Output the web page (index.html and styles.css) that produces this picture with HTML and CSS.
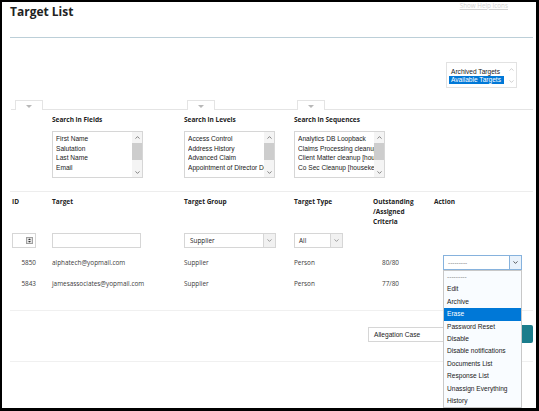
FILE: index.html
```html
<!DOCTYPE html>
<html lang="en">

<head>
    <meta charset="UTF-8" />
    <meta name="viewport" content="width=device-width, initial-scale=1" />
    <title>Target List</title>
    <link rel="stylesheet" href="styles.css">
</head>

<body>
    <div class="page">
        <header class="page-head">
            <h1>Target List</h1>
            <a href="#" class="help-link">Show Help Icons</a>
        </header>

        <div class="status-row">
            <div class="listbox status-list">
                <ul class="listbox-items">
                    <li>Archived Targets</li>
                    <li class="selected">Available Targets</li>
                </ul>
                <div class="listbox-bar faded">
                    <span class="bar-btn"><svg width="5" height="3" viewBox="0 0 5 3"><path d="M0.5 2.6 L2.5 0.6 L4.5 2.6" /></svg></span>
                    <span class="bar-space"></span>
                    <span class="bar-btn"><svg width="5" height="3" viewBox="0 0 5 3"><path d="M0.5 0.4 L2.5 2.4 L4.5 0.4" /></svg></span>
                </div>
            </div>
        </div>

        <!-- collapse tabs for the search panels -->
        <div class="search-tabs">
            <span class="tab tab-a"><svg width="6" height="3" viewBox="0 0 6 3"><path d="M0 0 H6 L3 3 Z" /></svg></span>
            <span class="tab tab-b"><svg width="6" height="3" viewBox="0 0 6 3"><path d="M0 0 H6 L3 3 Z" /></svg></span>
            <span class="tab tab-c"><svg width="6" height="3" viewBox="0 0 6 3"><path d="M0 0 H6 L3 3 Z" /></svg></span>
        </div>

        <div class="search-grid">
            <div></div>
            <div class="search-box">
                <div class="search-label">Search in Fields</div>
                <div class="listbox">
                    <ul class="listbox-items">
                        <li>First Name</li>
                        <li>Salutation</li>
                        <li>Last Name</li>
                        <li>Email</li>
                    </ul>
                    <div class="listbox-bar">
                        <span class="bar-btn up"><svg width="5" height="3" viewBox="0 0 5 3"><path d="M0.5 2.6 L2.5 0.6 L4.5 2.6" /></svg></span>
                        <span class="bar-thumb"></span>
                        <span class="bar-space"></span>
                        <span class="bar-btn"><svg width="5" height="3" viewBox="0 0 5 3"><path d="M0.5 0.4 L2.5 2.4 L4.5 0.4" /></svg></span>
                    </div>
                </div>
            </div>
            <div class="search-box">
                <div class="search-label">Search in Levels</div>
                <div class="listbox">
                    <ul class="listbox-items">
                        <li>Access Control</li>
                        <li>Address History</li>
                        <li>Advanced Claim</li>
                        <li>Appointment of Director Details</li>
                    </ul>
                    <div class="listbox-bar">
                        <span class="bar-btn up"><svg width="5" height="3" viewBox="0 0 5 3"><path d="M0.5 2.6 L2.5 0.6 L4.5 2.6" /></svg></span>
                        <span class="bar-thumb"></span>
                        <span class="bar-space"></span>
                        <span class="bar-btn"><svg width="5" height="3" viewBox="0 0 5 3"><path d="M0.5 0.4 L2.5 2.4 L4.5 0.4" /></svg></span>
                    </div>
                </div>
            </div>
            <div class="search-box">
                <div class="search-label">Search in Sequences</div>
                <div class="listbox">
                    <ul class="listbox-items">
                        <li>Analytics DB Loopback</li>
                        <li>Claims Processing cleanup [housekeeping]</li>
                        <li>Client Matter cleanup [housekeeping]</li>
                        <li>Co Sec Cleanup [housekeeping]</li>
                    </ul>
                    <div class="listbox-bar">
                        <span class="bar-btn up"><svg width="5" height="3" viewBox="0 0 5 3"><path d="M0.5 2.6 L2.5 0.6 L4.5 2.6" /></svg></span>
                        <span class="bar-thumb"></span>
                        <span class="bar-space"></span>
                        <span class="bar-btn"><svg width="5" height="3" viewBox="0 0 5 3"><path d="M0.5 0.4 L2.5 2.4 L4.5 0.4" /></svg></span>
                    </div>
                </div>
            </div>
        </div>

        <div class="target-table">
            <div class="trow thead">
                <div class="c-id">ID</div>
                <div>Target</div>
                <div>Target Group</div>
                <div>Target Type</div>
                <div class="c-count">Outstanding<br>/Assigned<br>Criteria</div>
                <div>Action</div>
            </div>

            <div class="trow tfilter">
                <div class="c-id">
                    <div class="input id-input">
                        <svg width="7" height="7" viewBox="0 0 7 7">
                            <rect x="0.5" y="0.5" width="6" height="6" fill="#e2e2e2" stroke="#a0a0a0" />
                            <path d="M2 3 L3.5 1.5 L5 3 Z M2 4 L3.5 5.5 L5 4 Z" fill="#333" />
                        </svg>
                    </div>
                </div>
                <div><div class="input target-input"></div></div>
                <div>
                    <div class="select group-select">
                        <span class="select-value">Supplier</span>
                        <span class="select-arrow"><svg width="5" height="3" viewBox="0 0 5 3"><path d="M0.5 0.4 L2.5 2.4 L4.5 0.4" /></svg></span>
                    </div>
                </div>
                <div>
                    <div class="select type-select">
                        <span class="select-value">All</span>
                        <span class="select-arrow"><svg width="5" height="3" viewBox="0 0 5 3"><path d="M0.5 0.4 L2.5 2.4 L4.5 0.4" /></svg></span>
                    </div>
                </div>
                <div></div>
                <div></div>
            </div>

            <div class="trow tdata">
                <div class="c-id">5850</div>
                <div>alphatech@yopmail.com</div>
                <div>Supplier</div>
                <div>Person</div>
                <div class="c-count">80/80</div>
                <div class="c-action">
                    <div class="action-wrap">
                        <div class="select action-select">
                            <span class="select-value">---------</span>
                            <span class="select-arrow"><svg width="5" height="3" viewBox="0 0 5 3"><path d="M0.5 0.4 L2.5 2.4 L4.5 0.4" /></svg></span>
                        </div>
                        <ul class="action-menu">
                            <li class="blank">---------</li>
                            <li>Edit</li>
                            <li>Archive</li>
                            <li class="active">Erase</li>
                            <li>Password Reset</li>
                            <li>Disable</li>
                            <li>Disable notifications</li>
                            <li>Documents List</li>
                            <li>Response List</li>
                            <li>Unassign Everything</li>
                            <li>History</li>
                        </ul>
                    </div>
                </div>
            </div>

            <div class="trow tdata">
                <div class="c-id">5843</div>
                <div>jamesassociates@yopmail.com</div>
                <div>Supplier</div>
                <div>Person</div>
                <div class="c-count">77/80</div>
                <div></div>
            </div>
        </div>

        <div class="bulk-row">
            <div class="select bulk-select">
                <span class="select-value">Allegation Case</span>
                <span class="select-arrow"><svg width="5" height="3" viewBox="0 0 5 3"><path d="M0.5 0.4 L2.5 2.4 L4.5 0.4" /></svg></span>
            </div>
            <button class="bulk-btn">Assign</button>
        </div>
    </div>
</body>

</html>
```

FILE: styles.css
```css
:root {
    --text-dark: #222222;
    --text: #3a3a3a;
    --line: #e4e4e4;
    --line-soft: #f0f0f0;
    --field-border: #d6d6d6;
    --select-blue: #0078d7;
    --focus: #86b2dd;
    --teal: #1b7d8c;
}

* {
    box-sizing: border-box;
}

html {
    background: #fff;
}

body {
    margin: 0;
    width: 539px;
    height: 411px;
    overflow: hidden;
    border: solid #000;
    border-width: 2px 3px 3px 2px;
    background: #fff;
    font-family: 'Open Sans', sans-serif;
    color: var(--text);
}

ul {
    margin: 0;
    padding: 0;
    list-style: none;
}

.page {
    padding: 0 3px 0 8px;
}

/* title bar */
.page-head {
    display: flex;
    justify-content: space-between;
    align-items: flex-start;
    height: 36px;
    border-bottom: 1px solid #bccfd8;
}

h1 {
    margin: 2px 0 0;
    font-size: 12px;
    line-height: 16px;
    font-weight: 700;
    color: var(--text-dark);
}

.help-link {
    margin: 0 25px 0 0;
    font-size: 6.3px;
    line-height: 8px;
    color: #d2d2d2;
}

/* generic list box with a drawn scrollbar */
.listbox {
    display: flex;
    width: 91px;
    height: 47px;
    border: 1px solid var(--field-border);
    background: #fff;
    font-family: 'Liberation Sans', Arial, sans-serif;
    font-size: 6.6px;
    color: #1a1a1a;
}

.listbox-items {
    flex: 1;
    min-width: 0;
    overflow: hidden;
    padding: 2px 0 0 3px;
}

.listbox-items li {
    line-height: 9.6px;
    white-space: nowrap;
    overflow: hidden;
}

.listbox-bar {
    display: flex;
    flex-direction: column;
    width: 10px;
    background: #f4f4f4;
}

.bar-btn {
    display: flex;
    align-items: center;
    justify-content: center;
    height: 10px;
}

.bar-btn.up {
    height: 11px;
}

.bar-btn svg path {
    fill: none;
    stroke: #666;
    stroke-width: 0.8;
}

.bar-thumb {
    height: 17px;
    background: #cdcdcd;
}

.bar-space {
    flex: 1;
}

.status-row {
    display: flex;
    justify-content: flex-end;
    margin-top: 24px;
    padding-right: 16px;
}

.status-list {
    width: 71px;
    height: 26px;
    border-color: #e2e2e2;
    font-size: 6.6px;
}

.status-list .listbox-items {
    padding: 5px 2px 0 2px;
}

.status-list .listbox-items li {
    line-height: 8px;
    padding-left: 2px;
}

.status-list li.selected {
    background: var(--select-blue);
    color: #fff;
}

.listbox-bar.faded {
    background: #fff;
}

.listbox-bar.faded .bar-btn {
    height: 12px;
}

.listbox-bar.faded svg path {
    stroke: #c4c4c4;
}

/* collapse tabs */
.search-tabs {
    display: flex;
    height: 10px;
    margin: 12px 0 0 1px;
    border-bottom: 1px solid var(--line);
}

.tab {
    display: flex;
    justify-content: center;
    width: 28px;
    height: 10px;
    padding-top: 4px;
    border: 1px solid var(--line);
    border-bottom: none;
    background: #fff;
}

.tab svg path {
    fill: #b8b8b8;
}

.tab-a {
    margin-left: 4px;
}

.tab-b {
    margin-left: 144px;
}

.tab-c {
    margin-left: 82px;
}

/* search panels */
.search-grid {
    display: grid;
    grid-template-columns: 42px 132px 110px 1fr;
    margin-top: 5px;
}

.search-label {
    margin-bottom: 6px;
    font-size: 6.5px;
    line-height: 10px;
    font-weight: 700;
    color: var(--text-dark);
}

/* targets table */
.target-table {
    margin-top: 13px;
    border-top: 1px solid #ededed;
}

.trow {
    display: grid;
    grid-template-columns: 42px 132px 110px 79px 61px 1fr;
    align-items: center;
}

.trow .c-id {
    padding-left: 2px;
}

.thead {
    align-items: start;
    padding-top: 5px;
    font-size: 6.5px;
    line-height: 10px;
    font-weight: 700;
    color: var(--text-dark);
}

.tfilter {
    margin: 6px 0 4px;
}

.tdata {
    height: 21px;
    font-size: 6.4px;
    color: var(--text);
}

.tdata .c-id {
    padding: 0 16px 0 0;
    text-align: right;
}

.tdata .c-count {
    padding-left: 9px;
}

.input {
    height: 15px;
    border: 1px solid var(--field-border);
    background: #fff;
}

.id-input {
    display: flex;
    align-items: center;
    justify-content: flex-end;
    width: 24px;
    padding-right: 2px;
}

.target-input {
    width: 89px;
}

.select {
    display: flex;
    height: 15px;
    border: 1px solid var(--field-border);
    background: #fff;
    font-size: 6.4px;
    color: var(--text-dark);
}

.select-value {
    flex: 1;
    padding-left: 5px;
    line-height: 13px;
    white-space: nowrap;
    overflow: hidden;
}

.select-arrow {
    display: flex;
    align-items: center;
    justify-content: center;
    width: 12px;
    border-left: 1px solid var(--field-border);
    background: #f1f1f1;
}

.select-arrow svg path {
    fill: none;
    stroke: #888;
    stroke-width: 0.8;
}

.group-select {
    width: 92px;
}

.type-select {
    width: 49px;
}

.type-select .select-value {
    padding-left: 4px;
}

/* action picker, shown open */
.c-action {
    padding-left: 9px;
}

.action-wrap {
    position: relative;
    width: 79px;
}

.action-select {
    border-color: var(--focus);
    font-family: 'Liberation Sans', Arial, sans-serif;
}

.action-select .select-value {
    padding-left: 4px;
    color: #8a8a8a;
}

.action-select .select-arrow {
    border-left-color: var(--focus);
    background: #e9f2fb;
}

.action-select .select-arrow svg path {
    stroke: #333;
}

.action-menu {
    position: absolute;
    top: 100%;
    left: 0;
    z-index: 5;
    width: 100%;
    border: 1px solid #c8c8c8;
    background: #f9fcff;
    font-family: 'Liberation Sans', Arial, sans-serif;
    font-size: 6.6px;
    color: #1a1a1a;
}

.action-menu li {
    height: 12.4px;
    line-height: 12.4px;
    padding-left: 3px;
    white-space: nowrap;
}

.action-menu li.blank {
    color: #8a8a8a;
}

.action-menu li.active {
    background: var(--select-blue);
    color: #fff;
}

/* bulk assignment */
.bulk-row {
    display: flex;
    justify-content: flex-end;
    align-items: center;
    gap: 4px;
    margin-top: 16px;
    padding: 14px 0 18px;
    border-top: 1px solid var(--line-soft);
    border-bottom: 1px solid var(--line-soft);
}

.bulk-select {
    width: 90px;
    font-family: 'Liberation Sans', Arial, sans-serif;
    font-size: 6.6px;
}

.bulk-btn {
    width: 71px;
    height: 18px;
    border: none;
    border-radius: 2px;
    background: var(--teal);
    color: #fff;
    font-family: 'Open Sans', sans-serif;
    font-size: 6.5px;
    font-weight: 600;
}
```
